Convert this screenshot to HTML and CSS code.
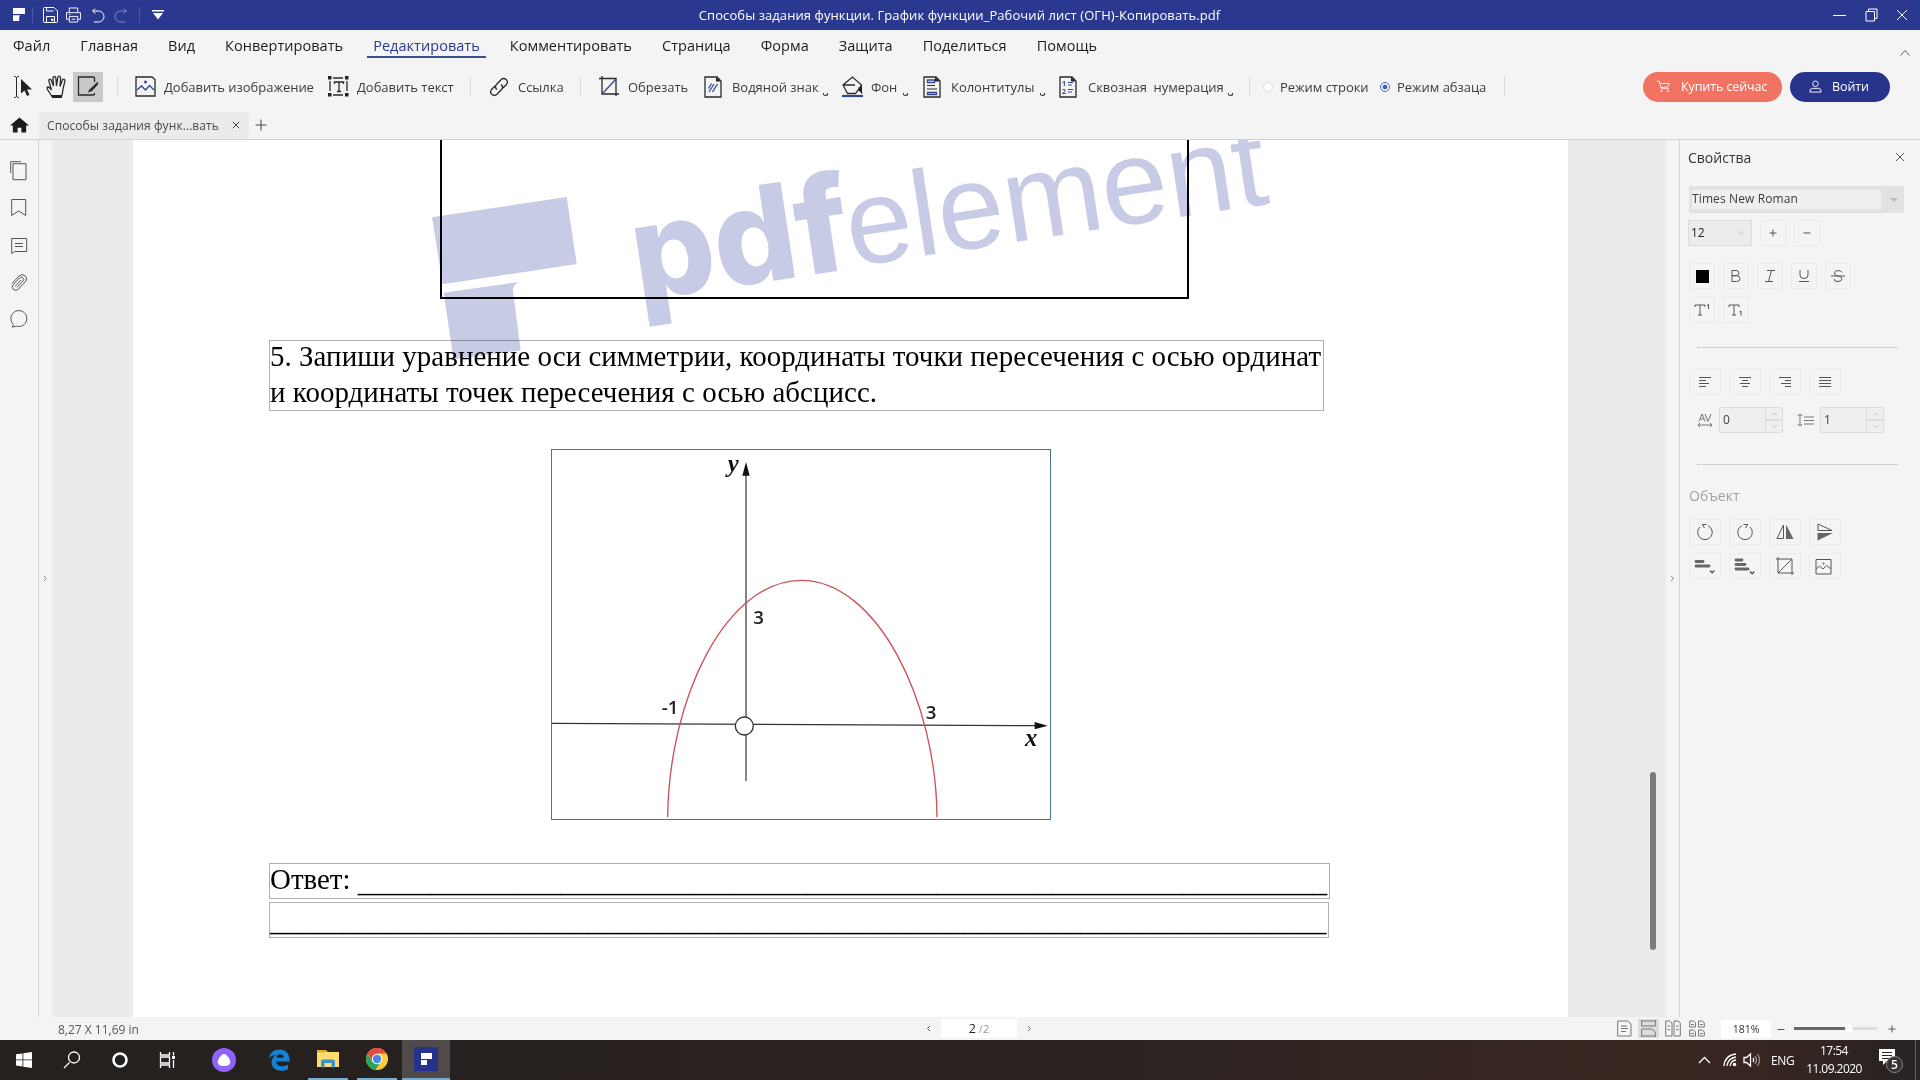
FILE: index.html
```html
<!DOCTYPE html>
<html lang="ru">
<head>
<meta charset="utf-8">
<title>PDFelement</title>
<link rel="stylesheet" href="styles.css">
</head>
<body>
<div class="app">
  <header class="titlebar">
    <div class="quick">
      <svg width="13" height="14" viewBox="0 0 13 14"><path class="solid" d="M1 0h12v6H1zM1 7.2h7.2Q7.2 8 7.2 9v4H1z"/></svg>
      <i class="bar"></i>
      <svg width="15" height="16" viewBox="0 0 15 16"><path d="M.5 1.5q0-1 1-1h9.500l3.500 3.500v10.500q0 1-1 1h-12q-1 0-1-1zM3.500 .5v3.500h7M3.500 15.500v-6h8v6M8.500 12h1.500v1.500h-1.500z"/></svg>
      <svg width="15" height="16" viewBox="0 0 16 16"><path d="M3.500 5V.5h9V5M3.500 12.500h-3V5.500h15v7h-3M3.500 9.500h9v6h-9zM6 12.500h4M3 7.500h1.500"/></svg>
      <svg width="14" height="15" viewBox="0 0 14 15"><path d="M4 .5L1.500 3l3 2.500M2 3h5.500a5 5 0 0 1 0 11H3"/></svg>
      <svg class="faded" width="14" height="15" viewBox="0 0 14 15"><path d="M10 .5L12.500 3l-3 2.500M12 3H6.500a5 5 0 0 0 0 11H11"/></svg>
      <i class="bar"></i>
      <svg width="12" height="10" viewBox="0 0 12 10"><path class="solid" d="M0 0h12v1.500H0zM1 3h10L6 9.500z"/></svg>
    </div>
    <div class="doc-title">Способы задания функции. График функции_Рабочий лист (ОГН)-Копировать.pdf</div>
    <div class="window-buttons">
      <svg width="14" height="14" viewBox="0 0 14 14"><path d="M0 7.500h13"/></svg>
      <svg width="14" height="14" viewBox="0 0 14 14"><path d="M1 3.500h8.500v9.500H1zM3.500 3.500V1h8.500v9.500H9.500"/></svg>
      <svg width="14" height="14" viewBox="0 0 14 14"><path d="M1 2l10 10M11 2L1 12"/></svg>
    </div>
  </header>

  <nav class="menu">
    <span>Файл</span><span>Главная</span><span>Вид</span><span>Конвертировать</span><span class="active">Редактировать</span><span>Комментировать</span><span>Страница</span><span>Форма</span><span>Защита</span><span>Поделиться</span><span>Помощь</span>
    <svg class="collapse" width="12" height="8" viewBox="0 0 12 8"><path d="M1.500 6.500L6 1.500l4.500 5"/></svg>
  </nav>

  <div class="toolbar">
    <svg width="22" height="24" viewBox="0 0 22 24"><path d="M1 1.500q2 0 2.500 1q.5-1 2.500-1M3.500 2v20M1 22.500q2 0 2.500-1q.5 1 2.500 1"/><path class="solid" d="M8 4v14.500l3.500-3l2.500 5.500 2.500-1.200-2.500-5.300h5z"/></svg>
    <svg width="22" height="24" viewBox="0 0 22 24"><path class="thick" d="M6 21.500L1.500 14.500q-1-2.500.5-2.500t3.500 3L3 6.500q-.5-2 .8-2.300t1.900 2L7.500 11 7 3.500q0-2 1.400-2t1.500 2L10.500 11l1.200-8q.3-2 1.700-1.800t1.200 2.300L14 11.500l2.300-6q.7-1.700 1.900-1.200t.6 2.300L17 14q-.3 4.500-1.500 7.500z"/><path class="solid" d="M6 20h10v3H6z"/></svg>
    <span class="edit-on"><svg width="22" height="22" viewBox="0 0 22 22"><path class="thick" d="M17.500 6V2q0-1-1-1h-15v18h15q1 0 1-1v-1"/><path class="solid" d="M20.500 6l1 1-8 8.500-2.500 1 1-2.500z"/><path class="heavy" d="M20 8l-6.500 7"/></svg></span>
    <i class="sep"></i>
    <svg width="21" height="22" viewBox="0 0 21 22"><path class="thick" d="M1 1h16l3 2.500V20H1z"/><path class="blue thick" d="M2 14l4.500-4 4 4 4-4.500L19 14"/><circle class="solid-blue" cx="10.500" cy="6" r="1.500"/></svg>
    <span>Добавить изображение</span>
    <svg width="21" height="21" viewBox="0 0 21 21"><path class="thick" d="M5 2h10M5 19h10M2 5v10M19 5v10M6.500 8V6h9v2M11 6v9.500M9 15.500h4"/><path class="solid" d="M0 0h3.500v3.500H0zM17 0h3.500v3.500H17zM0 17h3.500v3.500H0zM17 17h3.500v3.500H17z"/></svg>
    <span>Добавить текст</span>
    <i class="sep"></i>
    <svg width="20" height="20" viewBox="0 0 20 20"><path class="thick" d="M8 12.500l-1-1q-1.500-2 .5-4L12 2.700q2.500-2.200 5-.2t.5 5L14 11M12 7.500l1 1q1.500 2-.5 4L8 17.300q-2.500 2.200-5 .2t-.5-5L6 9"/></svg>
    <span>Ссылка</span>
    <i class="sep"></i>
    <svg width="20" height="21" viewBox="0 0 20 21"><path class="thick" d="M3 0v18h17M0 2.500h17V20"/><path class="blue thick" d="M4 17L17 3"/></svg>
    <span>Обрезать</span>
    <svg width="18" height="22" viewBox="0 0 18 22"><path class="thick" d="M1 1h12l4 4v16H1z"/><path class="solid" d="M12 1l5 4.500h-5z"/><path class="blue thick" d="M5 16l5-8M8.500 16l5-8M4.500 12.500l3-5"/></svg>
    <span>Водяной знак</span><b></b>
    <svg width="23" height="22" viewBox="0 0 23 22"><path class="thick" d="M2 9L11.500 1l9 8-6 8.500h-8zM2 9h12M18 11l3 6.500"/><path class="solid" d="M17 14l4-5v8.500z"/><path class="blue heavy" d="M1 20h21"/></svg>
    <span>Фон</span><b></b>
    <svg width="18" height="22" viewBox="0 0 18 22"><path class="thick" d="M1 1h12l4 4v16H1z"/><path class="solid" d="M12 1l5 4.500h-5z"/><path d="M4 9.500h8M4 13h10"/><path class="blue thick" d="M4.500 4h7v2.500h-7zM4.500 16.500h9V18.500h-9z"/></svg>
    <span>Колонтитулы</span><b></b>
    <svg width="18" height="22" viewBox="0 0 18 22"><path class="thick" d="M1 1h12l4 4v16H1z"/><path class="solid" d="M12 1l5 4.500h-5z"/><path class="blue" d="M9 6.500h5M9 9h4M9 13.500h5M9 16h4"/><text class="mini" x="3" y="10">1</text><text class="mini" x="3" y="17.500">2</text></svg>
    <span>Сквозная&nbsp; нумерация</span><b></b>
    <i class="sep"></i>
    <em class="radio"></em>
    <span>Режим строки</span>
    <em class="radio on"></em>
    <span>Режим абзаца</span>
    <i class="sep"></i>
    <div class="pill buy"><svg width="14" height="13" viewBox="0 0 16 14"><path d="M0 .8h2.500L5 9.500h8.500M3.500 3.500h10.500l-1.500 4-8 .8"/><circle class="solid" cx="5" cy="12" r="1"/><circle class="solid" cx="12.500" cy="12" r="1"/></svg><span>Купить сейчас</span></div>
    <div class="pill login"><svg width="13" height="13" viewBox="0 0 14 14"><circle cx="7" cy="4" r="3"/><path d="M1 13q-.5-4 3-4h6q3.500 0 3 4z"/></svg><span>Войти</span></div>
  </div>

  <div class="tabs">
    <svg width="19" height="16" viewBox="0 0 20 16"><path class="solid" d="M10 0l10 8.500h-3V16h-5v-5H8v5H3V8.500H0z"/></svg>
    <div class="tab"><span>Способы задания функ...вать</span><svg width="8" height="8" viewBox="0 0 8 8"><path d="M.8 .8l6.400 6.400M7.200 .8L.8 7.200"/></svg></div>
    <svg class="plus" width="12" height="12" viewBox="0 0 12 12"><path d="M6 .5v11M.5 6h11"/></svg>
  </div>

  <main class="work">
    <aside class="rail">
      <svg width="18" height="20" viewBox="0 0 18 20"><path d="M.7 12V.7H11M3 2.700h13v16H3z"/></svg>
      <svg width="18" height="20" viewBox="0 0 18 20"><path d="M1.700 1.500h14v16L8.700 13l-7 4.500z"/></svg>
      <svg width="18" height="20" viewBox="0 0 18 20"><path d="M1.700 2.500h15v13h-12l-3 2zM5 7.500h8M5 10.500h8"/></svg>
      <svg width="18" height="20" viewBox="0 0 18 20"><path d="M2 10.500l7-7.500q3-2.500 6-.3t.8 5.500L8.500 16q-2.500 2.500-5 .5t-.5-4.500l6.500-7q2-1.700 3.500 0t0 3l-6 6.500M5 13.500l6-6.500"/></svg>
      <svg width="18" height="20" viewBox="0 0 18 20"><path d="M3.500 14.500a8 8 0 1 1 3 1.700L2 17z"/></svg>
    </aside>
    <div class="gutter"><svg width="5" height="7" viewBox="0 0 5 7"><path d="M1 1l2.500 2.500L1 6"/></svg></div>
    <div class="canvas">
      <article class="page">
        <div class="frame"></div>
        <p class="task"><span class="l1">5. Запиши уравнение оси симметрии, координаты точки пересечения с осью ординат</span><span class="l2">и координаты точек пересечения с осью абсцисс.</span></p>
        <svg class="graph" width="500" height="371" viewBox="37 30 1494 1107">
          <path class="axis" d="M619 90V1023"/><path class="axis" d="M37 850L1500 857"/>
          <path class="arrow" d="M619 66l-11 41h22zM1524 857l-39-11v22z"/>
          <path class="curve" d="M384 1132C388 770 560 421 785 421C1010 421 1190 780 1192 1132"/>
          <circle class="origin" cx="614" cy="858" r="27"/>
          <text class="num" x="641" y="551">3</text><text class="num" x="366" y="822">-1</text><text class="num" x="1158" y="836">3</text>
          <text class="var" x="564" y="97">y</text><text class="var" x="1456" y="919">x</text>
        </svg>
        <div class="answer a1">Ответ: <span>___________________________________________________________________</span></div>
        <div class="answer a2">_________________________________________________________________________</div>
        <svg class="watermark" width="1435" height="877" viewBox="133 140 1435 877">
          <path d="M432 217.300L566.700 197l10 67L442.700 284.300zM443.700 292.700L519.300 282Q512.500 285 513 291L520.700 350.300 453.500 359.300z"/>
          <g transform="translate(645 298) rotate(-8.600)"><text class="wm-bold" x="-7" y="2" textLength="219" lengthAdjust="spacingAndGlyphs">pdf</text><text class="wm-thin" x="209" y="0" textLength="424" lengthAdjust="spacingAndGlyphs">element</text></g>
        </svg>
      </article>
      <div class="scroll"></div>
    </div>
    <div class="gutter right"><svg width="5" height="7" viewBox="0 0 5 7"><path d="M1 1l2.500 2.500L1 6"/></svg></div>
    <aside class="props">
      <div class="head"><span>Свойства</span><svg width="10" height="10" viewBox="0 0 10 10"><path d="M1 1l8 8M9 1L1 9"/></svg></div>
      <div class="font"><span>Times New Roman</span><i></i></div>
      <div class="row size"><div class="num-box">12<svg width="8" height="6" viewBox="0 0 8 6"><path d="M1 1l3 4 3-4"/></svg></div><div class="btn"><svg width="8" height="8" viewBox="0 0 8 8"><path d="M4 .5v7M.5 4h7"/></svg></div><div class="btn"><svg width="8" height="8" viewBox="0 0 8 8"><path d="M.5 4h7"/></svg></div></div>
      <div class="row style">
        <div class="btn"><i class="swatch"></i></div>
        <div class="btn"><svg width="12" height="14" viewBox="0 0 12 14"><path d="M2 1.500h4q3 0 3 2.500T6 6.700H2zM2 6.700h4.500q3.500 0 3.500 2.900t-3.500 2.900H2z"/></svg></div>
        <div class="btn"><svg width="12" height="14" viewBox="0 0 12 14"><path d="M3 1.500h8M1 12.500h8M7.500 1.500L4.500 12.500"/></svg></div>
        <div class="btn"><svg width="12" height="14" viewBox="0 0 12 14"><path d="M2 1v5q0 3.500 4 3.500T10 6V1M1 12.500h10"/></svg></div>
        <div class="btn"><svg width="14" height="14" viewBox="0 0 14 14"><path d="M11 3.500Q10 1.500 7 1.500T3.500 4t3.500 3 4 2.800T7 12.500 3 10M0 7h14"/></svg></div>
        <div class="btn"><svg width="16" height="14" viewBox="0 0 16 14"><path d="M1 4V2h10v2M6 2v10M4 12h4M13 2.500l1.500-1v4.500"/></svg></div>
        <div class="btn"><svg width="16" height="14" viewBox="0 0 16 14"><path d="M1 4V2h10v2M6 2v10M4 12h4M11.500 9l1.500-1v4.500"/></svg></div>
      </div>
      <hr>
      <div class="row wide">
        <div class="btn"><svg width="14" height="12" viewBox="0 0 14 12"><path d="M1 1.500h12M1 4.500h7M1 7.500h10M1 10.500h7"/></svg></div>
        <div class="btn"><svg width="14" height="12" viewBox="0 0 14 12"><path d="M1 1.500h12M4 4.500h6M2 7.500h10M4 10.500h6"/></svg></div>
        <div class="btn"><svg width="14" height="12" viewBox="0 0 14 12"><path d="M1 1.500h12M7 4.500h6M3 7.500h10M7 10.500h6"/></svg></div>
        <div class="btn"><svg width="14" height="12" viewBox="0 0 14 12"><path d="M1 1.500h12M1 4.500h12M1 7.500h12M1 10.500h12"/></svg></div>
      </div>
      <div class="row spacing">
        <svg width="16" height="16" viewBox="0 0 16 16"><path class="gray" d="M2 9.500L5 2l3 7.500M3 7h4M8 2l3 7.500L14 2M1 13h14M3 11l-2 2 2 2M13 11l2 2-2 2"/></svg>
        <div class="spin">0<i><svg width="17" height="24" viewBox="0 0 17 24"><path d="M6 7.500L8.500 5 11 7.500M6 17l2.500 2.500L11 17"/></svg></i></div>
        <svg width="17" height="14" viewBox="0 0 17 14"><path class="gray" d="M3 1v12M1 3l2-2 2 2M1 11l2 2 2-2M7 4h10M7 7.500h10M7 11h10"/></svg>
        <div class="spin">1<i><svg width="17" height="24" viewBox="0 0 17 24"><path d="M6 7.500L8.500 5 11 7.500M6 17l2.500 2.500L11 17"/></svg></i></div>
      </div>
      <hr>
      <div class="object">Объект</div>
      <div class="row wide objects">
        <div class="btn"><svg width="18" height="18" viewBox="0 0 18 18"><path d="M4 4a7.300 7.300 0 1 0 8-1.300M6 1.500h4.500M6.500 2l2 3"/></svg></div>
        <div class="btn"><svg width="18" height="18" viewBox="0 0 18 18"><path d="M14 4a7.300 7.300 0 1 1-8-1.300M12 1.500H7.500M11.500 2l-2 3"/></svg></div>
        <div class="btn"><svg width="18" height="16" viewBox="0 0 18 16"><path d="M7.500 1v13.500H1z"/><path class="solid" d="M10 .5v14.500h7.500z"/></svg></div>
        <div class="btn"><svg width="16" height="18" viewBox="0 0 16 18"><path d="M1 1v6.500h14z"/><path class="solid" d="M.5 10h15.500L.5 17.500z"/></svg></div>
        <div class="btn"><svg width="22" height="16" viewBox="0 0 22 16"><path class="block" d="M2 3.500h7M2 8h13"/><path class="tick" d="M16 12.500l2.200 2.200 2.200-2.200"/></svg></div>
        <div class="btn"><svg width="22" height="16" viewBox="0 0 22 16"><path class="block" d="M2 2h6M2 6.500h9M2 11h12"/><path class="tick" d="M16 13.500l2.200 2.200 2.200-2.200"/></svg></div>
        <div class="btn"><svg width="18" height="18" viewBox="0 0 18 18"><path d="M2 0v16h16M0 2h16v16M2 16L16 2"/></svg></div>
        <div class="btn pic"><svg width="17" height="17" viewBox="0 0 17 17"><path d="M1 1.500h15v14.500H1zM1 11l3.500-3 3.500 3 3.500-3.500L16 11"/><circle class="solid" cx="8.500" cy="5.500" r="1"/></svg></div>
      </div>
    </aside>
  </main>

  <footer class="status">
    <span class="dims">8,27 X 11,69 in</span>
    <svg width="5" height="7" viewBox="0 0 5 7"><path class="dark" d="M4 1L1.500 3.500 4 6"/></svg>
    <div class="pager"><b>2</b> /2</div>
    <svg width="5" height="7" viewBox="0 0 5 7"><path d="M1 1l2.500 2.500L1 6"/></svg>
    <div class="views">
      <span><svg width="15" height="17" viewBox="0 0 15 17"><path d="M.7 1h10l3.300 3v12H.7zM4 6h6M4 8.500h7M4 11.500h5"/></svg></span>
      <span class="sel"><svg width="15" height="17" viewBox="0 0 15 17"><path d="M.7 0v6h13.600V0M.7 17V9h10l3.600 3v5M.7 16h13.600M.7 1h13.600"/></svg></span>
      <span><svg width="16" height="17" viewBox="0 0 16 17"><path d="M.7 1h4L7 3v13H.7zM9 1h4l2.300 2v13H9zM2.500 6H5M2.500 9.500H5M11 6h2.500M11 9.500h2.500"/></svg></span>
      <span><svg width="16" height="17" viewBox="0 0 16 17"><path d="M.7 1h4L6.500 3v4H.7zM9.500 1h4L15.300 3v4H9.500zM.7 10h4l1.800 2v4H.7zM9.500 10h4l1.800 2v4H9.500zM2 4.500h3M11 4.500h3M2 13.500h3M11 13.500h3"/></svg></span>
    </div>
    <div class="zoom">181%</div>
    <svg width="8" height="8" viewBox="0 0 8 8"><path class="dark" d="M.5 4.500h7"/></svg>
    <div class="track"><i></i></div>
    <svg width="8" height="8" viewBox="0 0 8 8"><path class="dark" d="M4 .5v7M.5 4h7"/></svg>
  </footer>

  <div class="taskbar">
    <div class="t"><svg width="16" height="16" viewBox="0 0 16 16"><path fill="#fff" d="M0 2.300l6.500-.9v6.100H0zM7.300 1.300L16 0v7.500H7.300zM0 8.300h6.500v6.100L0 13.600zM7.300 8.300H16V16l-8.700-1.300z"/></svg></div>
    <div class="t"><svg width="18" height="18" viewBox="0 0 18 18"><path class="w" d="M6.500 11.500L1 17"/><circle class="w" cx="11" cy="6.500" r="5.500"/></svg></div>
    <div class="t"><svg width="16" height="16" viewBox="0 0 16 16"><circle class="w ring" cx="8" cy="8" r="6.500"/></svg></div>
    <div class="t"><svg width="18" height="16" viewBox="0 0 18 16"><path class="w" d="M1.500 0v3h9V0M1.500 5h9v6h-9zM1.500 16v-3h9v3M14.500 0v3.500M14.500 8v8"/><path fill="#fff" d="M13 4h3v3h-3z"/></svg></div>
    <div class="t gap"><svg width="24" height="24" viewBox="0 0 24 24"><circle cx="12" cy="12" r="12" fill="#8f63fa"/><path d="M12 6c3 0 7 6.500 6.200 9S14.500 18 12 18s-5.400-.5-6.200-3S9 6 12 6z" fill="#fff"/></svg></div>
    <div class="t"><svg width="21" height="22" viewBox="0 0 21 22"><path fill="#1580d8" d="M0 9.500C1 3.500 5 .5 10.500.5 17 .5 20.500 5 20.500 10v2.500H7.200c.2 3.500 3 4.700 6 4.700 2.200 0 4.300-.7 5.800-1.500v4.500c-2 1-4.500 1.500-7 1.500C6 21.700 2.600 18 2.600 13.500c0-3.500 1.800-6 4.500-7.500C3.800 6 1.300 7.500 0 9.500zM7.300 8.800h7.400c0-2.300-1.200-3.600-3.400-3.600-2.300 0-3.700 1.600-4 3.600z"/></svg></div>
    <div class="t run"><svg width="22" height="18" viewBox="0 0 22 18"><path fill="#e3ad25" d="M1 0h8l2 2h-10z"/><path fill="#ffdc70" d="M0 2h22v15H0z"/><path fill="#e3ad25" d="M0 0h8v2.500H0z"/><path fill="#3f92c9" d="M4 17.500v-6q0-2 2-2h10q2 0 2 2v6h-3.500V13h-7v4.500z"/></svg></div>
    <div class="t run"><svg width="22" height="22" viewBox="0 0 22 22"><circle cx="11" cy="11" r="11" fill="#fccc3c"/><path fill="#de4d40" d="M1.500 5.500a11 11 0 0 1 19 0H11l-4.700 8.200z"/><path fill="#2aa456" d="M1.500 5.500a11 11 0 0 0 8 16.400L14.500 14H6.200z"/><circle cx="11" cy="11" r="5.200" fill="#fff"/><circle cx="11" cy="11" r="4.200" fill="#4a87ea"/></svg></div>
    <div class="t current"><svg width="24" height="24" viewBox="0 0 24 24"><path fill="#24328e" d="M0 0h24v24H0z"/><path fill="#fff" d="M7 6h11v6H7zM7 13h6v5H7z"/></svg></div>
    <div class="tray">
      <svg width="13" height="8" viewBox="0 0 13 8"><path class="w" d="M1 7l5.500-5.500L12 7"/></svg>
      <svg width="14" height="14" viewBox="0 0 14 14"><path class="w" d="M1 13Q2 2 13 1M4 13Q5 5 13 4M7 13q1-5.500 6-6"/><circle cx="11.500" cy="11.500" r="1.800" fill="#fff"/></svg>
      <svg width="18" height="14" viewBox="0 0 18 14"><path class="w" d="M1 4.500h2.500L7.500 1v12L3.500 9.500H1zM10 5q1.500 2 0 4"/><path class="w dim" d="M12 3q3 4 0 8M14.500 1q4 6 0 12"/></svg>
      <span class="lang">ENG</span>
      <span class="clock"><span>17:54</span><span>11.09.2020</span></span>
      <svg width="26" height="26" viewBox="0 0 26 26"><path fill="#fff" d="M1 2h16v12H9l-4 4v-4H1z"/><path stroke="#2b2322" d="M4 5.500h10M4 8.500h10M4 11.500h7"/><circle cx="16.500" cy="17.500" r="8" fill="#343232" stroke="#8a8686"/><text x="13" y="22" class="badge">5</text></svg>
      <i class="desk"></i>
    </div>
  </div>
</div>
</body>
</html>
```
FILE: styles.css
```css
* { box-sizing: border-box; }
body { margin: 0; font-family: "Open Sans", "Noto Sans", sans-serif; color: #3c3c3c; background: #f4f4f4; overflow: hidden; }
svg { display: block; fill: none; stroke: #444; stroke-width: 1; flex: none; overflow: visible; }
svg text { stroke: none; }
.app { width: 1920px; height: 1080px; display: grid; grid-template-rows: 30px 35px 46px 29px 877px 23px 40px; }

.titlebar { display: grid; grid-template-columns: 500px 917px 1fr; background: #2b388f; color: #fff; align-items: center; }
.titlebar svg { stroke: #fff; }
.titlebar .solid { fill: #fff; stroke: none; }
.quick { display: grid; grid-template-columns: 20px 11px 23px 25px 23px 25px 13px 20px; padding-left: 12px; align-items: center; }
.quick .bar { width: 1px; height: 16px; background: #4a58a8; }
.quick .faded { opacity: .4; }
.doc-title { text-align: center; font-size: 13px; letter-spacing: .08px; padding-left: 2px; white-space: nowrap; line-height: 30px; }
.window-buttons { display: grid; grid-template-columns: 32px 31px 14px; padding-left: 416px; }

.menu { display: flex; gap: 30px; padding-left: 13px; font-size: 14.500px; letter-spacing: .04px; color: #1c1c1c; line-height: 31px; white-space: nowrap; }
.menu .active { color: #2b388f; height: 28px; border-bottom: 2px solid #3a4f8c; margin: 0 -6px; padding: 0 6px; }
.collapse { margin: 19px 9px 0 auto; stroke: #666; }

.toolbar { display: grid; align-items: center; height: 43px; font-size: 13px; letter-spacing: -.03px; white-space: nowrap; padding-left: 13px;
  grid-template-columns: 33px 27px 44px 18px 29px 164px 29px 113px 19px 29px 62px 19px 29px 76px 28px 91px 18px 30px 32px 20px 28px 89px 19px 29px 140px 21px 14px 17px 100px 17px 107px 139px 147px 100px; }
.toolbar svg { stroke: #2a2a2a; }
.toolbar .thick { stroke-width: 1.3; }
.toolbar .heavy { stroke-width: 2.2; }
.toolbar .solid { fill: #222; stroke: none; }
.toolbar .blue { stroke: #34458f; }
.toolbar .solid-blue { fill: #34458f; stroke: none; }
.mini { font-size: 7px; font-weight: 700; fill: #34458f; }
.edit-on { width: 30px; height: 30px; background: #c9c9c9; display: grid; place-items: center; }
.sep { width: 1px; height: 21px; background: #dadada; }
.toolbar b { width: 5px; height: 3px; border: solid #333; border-width: 0 1px 1px; border-radius: 0 0 3px 3px; margin-top: 16px; }
.radio { width: 10px; height: 10px; border-radius: 50%; border: 1px solid #ddd; background: #fff; }
.radio.on { border-color: #4a66c8; background: radial-gradient(circle, #3f5dc4 2px, #fff 2.800px); }
.pill { height: 30px; border-radius: 15px; color: #fff; display: flex; align-items: center; font-size: 12.500px; letter-spacing: -.1px; }
.toolbar .pill svg { stroke: #fff; }
.toolbar .pill .solid { fill: #fff; }
.buy { width: 139px; background: #f27361; padding-left: 14px; gap: 10px; }
.login { width: 100px; background: #27348b; padding-left: 19px; gap: 10px; }

.tabs { display: flex; align-items: center; border-bottom: 1px solid #d3d3d3; padding-left: 10px; }
.tabs .solid { fill: #1c1c1c; stroke: none; }
.tab { margin-left: 10px; width: 210px; height: 27px; background: #ebebeb; display: flex; align-items: center; justify-content: space-between; padding: 0 9px 0 8px; font-size: 12px; letter-spacing: .08px; color: #4a4a4a; white-space: nowrap; }
.plus { margin-left: 6px; }

.work { display: grid; grid-template-columns: 39px 13px 1614px 13px 241px; }
.rail { border-right: 1px solid #d3d3d3; padding: 21px 0 0 10px; display: flex; flex-direction: column; gap: 17.300px; }
.rail svg { stroke: #555; }
.gutter { display: flex; align-items: center; padding: 0 4px; }
.gutter svg { stroke: #888; }
.canvas { background: #ebebeb; padding-left: 81px; display: flex; overflow: hidden; }
.page { position: relative; width: 1435px; height: 877px; background: #fff; font: 28.930px/36px "Liberation Serif", serif; color: #000; overflow: hidden; }
.frame { margin-left: 307px; width: 749px; height: 159px; border: 2px solid #000; border-top: 0; }
.task { margin: 41px 0 0 136px; width: 1055px; height: 71px; border: 1px solid #b0b0b0; display: flex; flex-direction: column; white-space: nowrap; letter-spacing: .048px; }
.l1 { margin-top: -3px; }
.graph { margin: 38px 0 0 418px; border: 1px solid #4671a0; }
.axis { stroke: #333; stroke-width: 3.500; }
.arrow { fill: #111; stroke: none; }
.curve { stroke: #cc5058; stroke-width: 4; }
.origin { fill: #fff; stroke: #333; stroke-width: 4; }
.num { font: 600 56px "Open Sans", sans-serif; fill: #222; }
.var { font: italic bold 74px "Liberation Serif", serif; fill: #111; }
.answer { margin-left: 136px; height: 36px; border: 1px solid #b0b0b0; line-height: 34px; white-space: nowrap; }
.a1 { margin-top: 43px; width: 1061px; line-height: 31px; }
.a1 span { display: inline-block; height: 31px; vertical-align: -3px; letter-spacing: .01px; }
.a2 { margin-top: 3px; width: 1060px; line-height: 36px; letter-spacing: .01px; }
.watermark { position: absolute; left: 0; top: 0; fill: #c8cbe5; stroke: none; mix-blend-mode: multiply; }
.wm-bold { font: 800 133px Inter, sans-serif; }
.wm-thin { font: 121px "Liberation Sans", sans-serif; }
.scroll { width: 6px; height: 178px; margin: 632px 0 0 82px; border-radius: 3px; background: #7c7c7c; }

.props { border-left: 1px solid #d3d3d3; padding-left: 8px; }
.head { display: flex; justify-content: space-between; font-size: 14px; line-height: 36px; color: #333; padding: 0 15px 0 0; }
.head svg { margin-top: 12px; stroke: #555; }
.font { margin: 10px 0 0 1px; width: 215px; height: 27px; background: #e2e2e2; padding: 4px 3px; display: flex; align-items: center; font-size: 12px; letter-spacing: .12px; }
.font span { width: 189px; height: 19px; line-height: 18px; background: #efefef; }
.font i { margin-left: 9px; border: 4px solid transparent; border-top-color: #bbb; border-bottom: 0; }
.row { display: flex; }
.row .btn { width: 26px; height: 26px; border: 1px solid #ececec; display: grid; place-items: center; }
.props .btn svg { stroke: #555; }
.props .solid { fill: #666; stroke: none; }
.props .block { stroke: #666; stroke-width: 2.800; stroke-linecap: round; }
.props .tick { stroke-width: 1.500; }
.props .gray { stroke: #777; }
.size { margin-top: 7px; gap: 8px; }
.num-box { width: 64px; height: 26px; border: 1px solid #dcdcdc; background: #ececec; font-size: 12px; line-height: 24px; padding: 0 6px 0 2px; color: #222; display: flex; justify-content: space-between; align-items: center; }
.num-box svg { stroke: #ccc; }
.style { margin: 17px 0 0 1px; flex-wrap: wrap; gap: 8px; width: 180px; }
.style .btn:nth-child(5) { margin-right: 5px; }
.swatch { width: 13px; height: 13px; background: #000; }
.props hr { margin: 24px 0 0 9px; width: 201px; border: 0; border-top: 1px solid #cfcfcf; }
.wide { margin: 21px 0 0 1px; gap: 8px; }
.wide .btn { width: 32px; }
.spacing { margin: 12px 0 0 9px; display: grid; grid-template-columns: 22px 78px 23px 64px; align-items: center; }
.spin { width: 64px; height: 26px; border: 1px solid #dcdcdc; background: #efefef; display: flex; justify-content: space-between; font-size: 12px; line-height: 23px; padding-left: 3px; border-radius: 2px; }
.spin i { width: 17px; border-left: 1px solid #dcdcdc; background: linear-gradient(transparent 11px, #dcdcdc 11px, #dcdcdc 13px, transparent 13px); }
.spin svg { stroke: #c4c4c4; }
.spacing + hr { margin-top: 31px; }
.object { margin: 20px 0 0 1px; font-size: 14px; line-height: 22px; color: #a2a2a2; }
.objects { margin-top: 12px; width: 160px; flex-wrap: wrap; }
.pic svg { margin-right: 4px; }

.status { display: grid; align-items: center; font-size: 12px; color: #555; padding-left: 58px; grid-template-columns: 868px 15px 86px 587px 107px 56px 17px 94px 8px; }
.status svg { stroke: #777; }
.status .dark { stroke: #555; }
.dims { padding-top: 2px; }
.pager { width: 76px; height: 19px; background: #fff; color: #999; text-align: center; font-size: 11px; line-height: 19px; }
.pager b { font-weight: 400; font-size: 12.500px; color: #222; }
.views { display: grid; grid-template-columns: repeat(4, 24px); }
.views span { width: 21px; height: 19px; display: grid; place-items: center; }
.views .sel { background: #dcdcdc; }
.zoom { width: 50px; height: 18px; background: #fff; text-align: center; font-size: 10.500px; line-height: 18px; color: #333; }
.track { width: 83px; height: 3px; background: linear-gradient(90deg, #666 55px, #ddd 55px); }
.track i { display: block; width: 8px; height: 8px; border-radius: 50%; background: #fff; margin-left: 51px; transform: translateY(-2.500px); }

.taskbar { display: flex; background: linear-gradient(90deg, #24211f 0, #272120 500px, #2d2321 1200px, #3a2722 1640px, #352521 1780px, #292323 1900px); }
.taskbar svg { stroke: none; }
.taskbar .w { stroke: #fff; stroke-width: 1.300; }
.taskbar .ring { stroke-width: 2.600; }
.taskbar .dim { opacity: .5; }
.t { width: 48px; display: grid; place-items: center; }
.gap { margin-left: 8px; }
.t.gap + .t { margin: 0 1px 0 7px; }
.run { border-bottom: 2px solid #76add3; width: 40px; margin-right: 9px; }
.t.run:nth-child(7) { margin-left: 4px; }
.t.run:nth-child(8) { margin-right: 5px; }
.current { border-bottom: 2px solid #76add3; background: #504b4a; }
.tray { margin-left: auto; display: grid; width: 222px; grid-template-columns: 25px 20px 28px 35px 72px 37px 5px; align-items: center; color: #fff; font-size: 12px; }
.lang { letter-spacing: -.4px; }
.clock { display: grid; line-height: 18px; width: 56px; text-align: center; letter-spacing: -.55px; }
.badge { font: 600 12px "Open Sans", sans-serif; fill: #fff; }
.desk { width: 1px; height: 40px; background: #655c5a; }
```
